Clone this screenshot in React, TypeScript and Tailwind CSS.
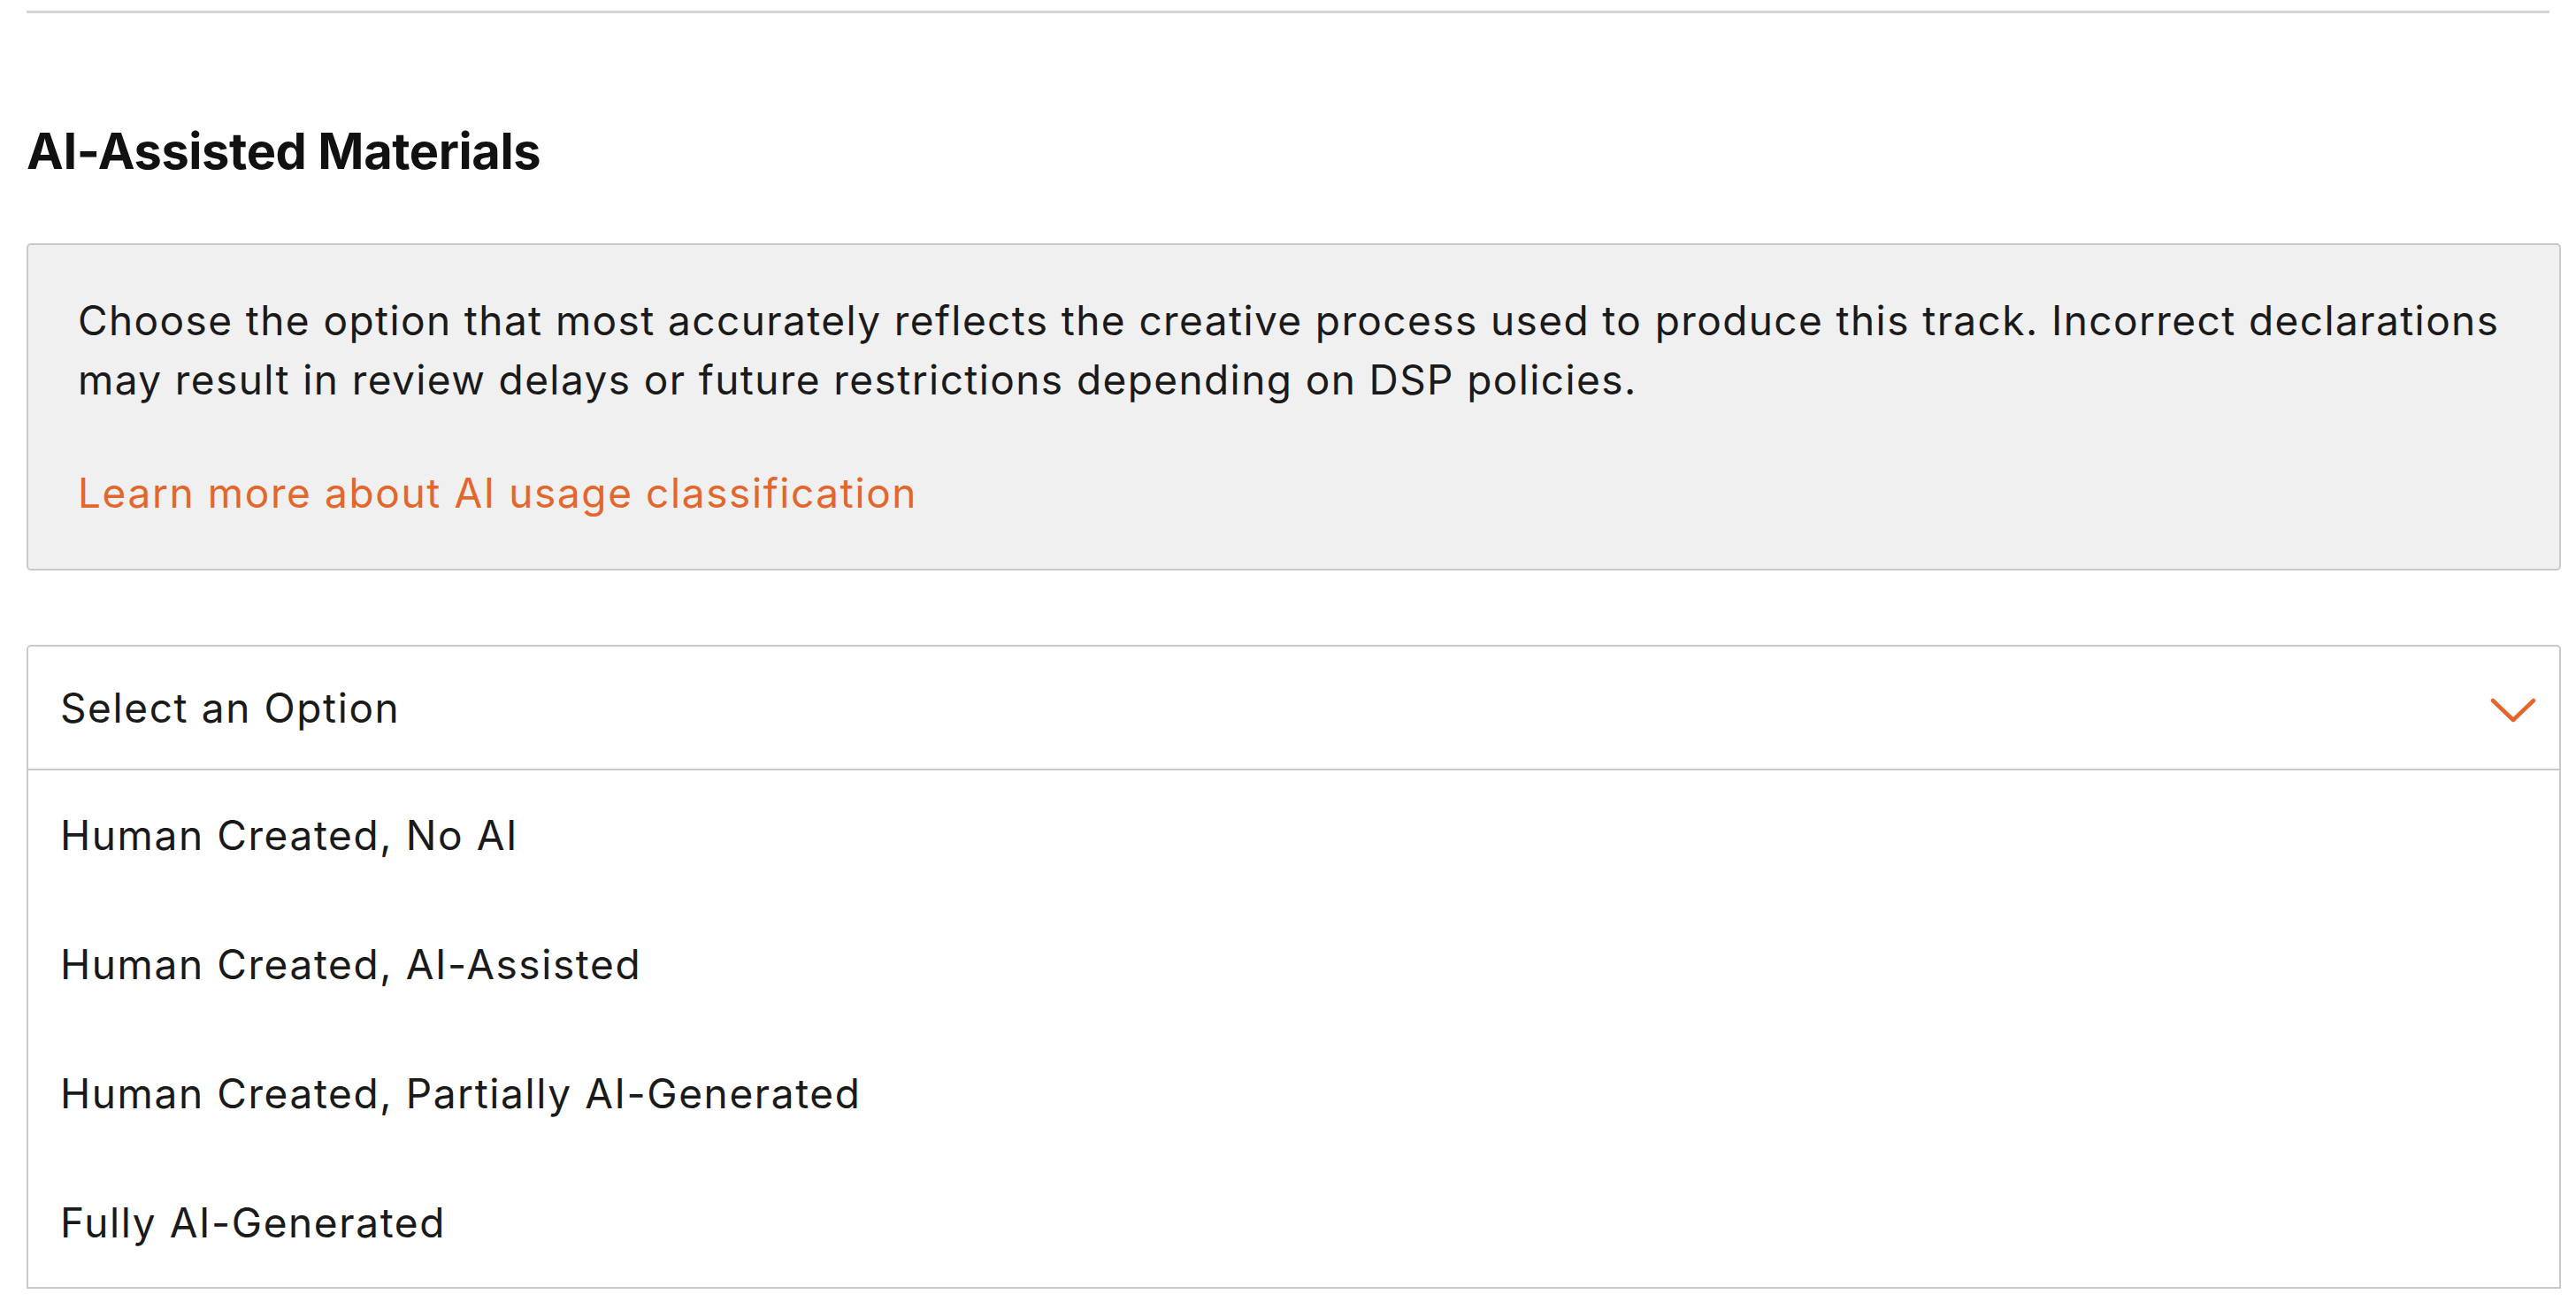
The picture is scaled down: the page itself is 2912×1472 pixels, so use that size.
const options = [
  'Human Created, No AI',
  'Human Created, AI-Assisted',
  'Human Created, Partially AI-Generated',
  'Fully AI-Generated',
];

function Chevron() {
  return (
    <svg width="52" height="30" viewBox="0 0 52 30" fill="none" className="mt-[6px] shrink-0">
      <polyline
        points="3,4 26,26 49,4"
        stroke="#e3672d"
        strokeWidth="4.5"
        strokeLinecap="round"
        strokeLinejoin="round"
      />
    </svg>
  );
}

export default function App() {
  return (
    <div
      className="min-h-screen bg-white pt-[12px] pr-[17px] pl-[30px] text-[#1a1a1a]"
      style={{ fontFamily: 'Inter, "Noto Sans", sans-serif' }}
    >
      <div className="mr-[13px] border-t-[3px] border-[#d4d4d4]" />

      <h2 className="mt-[118px] text-[56px] font-bold leading-[76px] tracking-[-0.4px] text-[#111]">
        AI-Assisted Materials
      </h2>

      <div className="mt-[66px] rounded-[5px] border-2 border-[#c9c9c9] bg-[#f0f0f0] pt-[52px] pr-[30px] pb-[52px] pl-[56px]">
        <p className="text-[46px] leading-[67px] tracking-[1.4px]">
          Choose the option that most accurately reflects the creative process used to produce this track. Incorrect declarations
          may result in review delays or future restrictions depending on DSP policies.
        </p>
        <a href="#" className="mt-[61px] block text-[46px] leading-[67px] tracking-[1.6px] text-[#e3672d]">
          Learn more about AI usage classification
        </a>
      </div>

      <div className="mt-[84px] rounded-t-[5px] border-2 border-[#c9c9c9] bg-white">
        <div className="flex h-[140px] items-center justify-between border-b-2 border-[#c9c9c9] pl-[36px] pr-[26px]">
          <span className="text-[46px] tracking-[1.6px]">Select an Option</span>
          <Chevron />
        </div>
        <ul>
          {options.map((o) => (
            <li key={o} className="flex h-[146px] items-center pl-[36px] text-[46px] tracking-[1.6px]">
              {o}
            </li>
          ))}
        </ul>
      </div>
    </div>
  );
}
